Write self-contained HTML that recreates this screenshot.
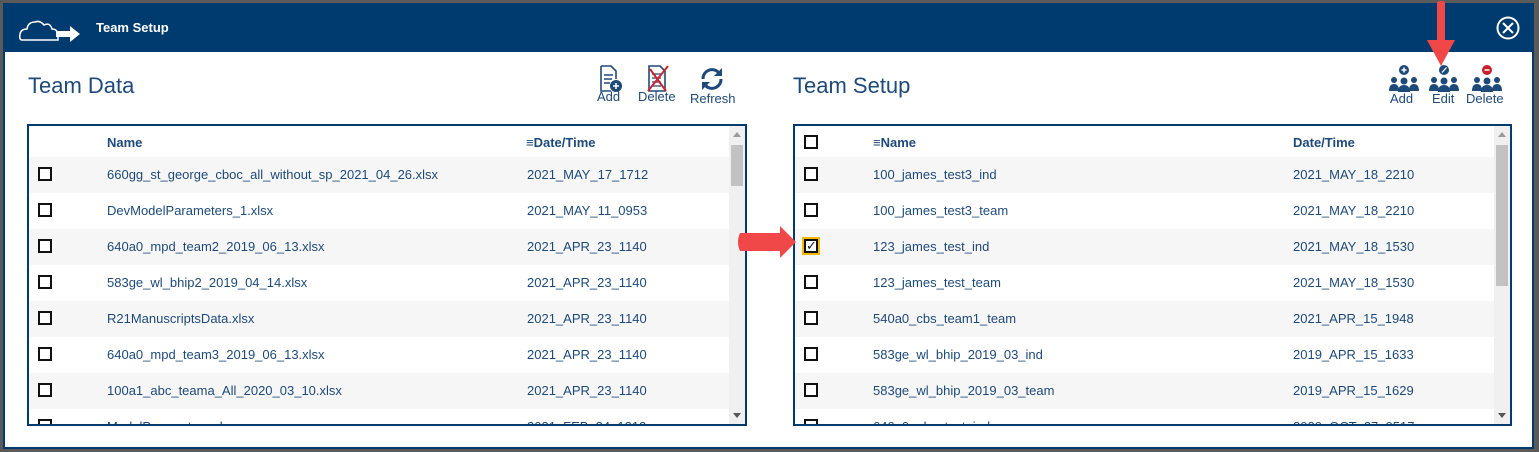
<!DOCTYPE html>
<html><head><style>
*{box-sizing:border-box;margin:0;padding:0}
body{width:1539px;height:452px;background:#5a5a5a;font-family:"Liberation Sans",sans-serif;position:relative;overflow:hidden}
.modal{position:absolute;left:3px;top:3px;width:1531px;height:446px;background:#fff;border:2px solid #003b6f;border-top:0}
.bar{position:absolute;left:0;top:0;width:100%;height:49px;background:#003b6f;color:#fff}
.bar .t{position:absolute;left:91px;top:17px;font-size:13px;font-weight:bold}
.h{position:absolute;top:70px;font-size:22px;color:#1e4a7a}
.tb{position:absolute;top:121px;height:302px;border:2px solid #003b6f;overflow:hidden;background:#fff}
.row{position:absolute;left:0;height:36px;width:100%;font-size:13px;color:#1e4a7a}
.row.g{background:#f6f6f6}
.row span{position:absolute;top:10px;white-space:nowrap}
.cb{position:absolute;left:9px;top:10px;width:14px;height:14px;border:2px solid #111;background:#fff}
.hd{font-weight:bold;font-size:13px}
.sb{position:absolute;top:0;right:0;width:16px;height:100%;background:#f0f0f0}
.sb .th{position:absolute;left:2px;width:12px;background:#c2c2c2}
.ic{position:absolute;font-size:13px;color:#1e4a7a;text-align:center}
</style></head><body>
<div class="modal">
<div class="bar">
<svg style="position:absolute;left:13px;top:14px" width="72" height="26" viewBox="0 0 72 26"><path d="M4 23 Q1 23 2 17 Q3 12 9 12 Q10 5 17 5 Q22 3 26 8 Q32 5 34 12 Q40 12 40 19 L40 23 Z" fill="none" stroke="#fff" stroke-width="1.5"/><path d="M38 14 H52 V9 L62 17 L52 25 V20 H38 Z" fill="#fff"/></svg>
<div class="t">Team Setup</div>
<svg style="position:absolute;left:1491px;top:13px" width="24" height="24" viewBox="0 0 24 24"><circle cx="12" cy="12" r="10.5" fill="none" stroke="#fff" stroke-width="2"/><path d="M7 7L17 17M17 7L7 17" stroke="#fff" stroke-width="2"/></svg>
</div>
<div class="h" style="left:23px">Team Data</div>
<div class="h" style="left:788px">Team Setup</div>

<svg style="position:absolute;left:594px;top:62px" width="26" height="28" viewBox="0 0 26 28"><path d="M2 1H12L17 6V14" fill="none" stroke="#1e4a7a" stroke-width="1.6"/><path d="M2 1V26H12" fill="none" stroke="#1e4a7a" stroke-width="1.6"/><path d="M5 10H14M5 14H13M5 18H11" stroke="#1e4a7a" stroke-width="1.4"/><circle cx="17" cy="21" r="6" fill="#1e4a7a"/><path d="M17 18V24M14 21H20" stroke="#fff" stroke-width="1.6"/></svg>
<div class="ic" style="left:592px;top:86px">Add</div>
<svg style="position:absolute;left:641px;top:62px" width="26" height="28" viewBox="0 0 26 28"><path d="M3 1H14L19 6V26H3Z" fill="none" stroke="#1e4a7a" stroke-width="1.6"/><path d="M6 9H15M6 13H15M6 17H15M6 21H15" stroke="#1e4a7a" stroke-width="1.2"/><path d="M4 4L20 26M22 1L2 26" stroke="#d0222c" stroke-width="2"/></svg>
<div class="ic" style="left:633px;top:86px">Delete</div>
<svg style="position:absolute;left:693px;top:62px" width="28" height="28" viewBox="0 0 28 28"><path d="M5 14A9 9 0 0 1 21 8" fill="none" stroke="#1e4a7a" stroke-width="3"/><path d="M23 14A9 9 0 0 1 7 20" fill="none" stroke="#1e4a7a" stroke-width="3"/><path d="M24 3V11H16Z" fill="#1e4a7a"/><path d="M4 25V17H12Z" fill="#1e4a7a"/></svg>
<div class="ic" style="left:685px;top:88px">Refresh</div>

<svg style="position:absolute;left:1383px;top:61px" width="32" height="28" viewBox="0 0 32 28"><circle cx="16" cy="6" r="5" fill="#1e4a7a"/><path d="M16 3.5V8.5M13.5 6H18.5" stroke="#fff" stroke-width="1.5"/><g fill="#1e4a7a"><circle cx="6" cy="16" r="3"/><circle cx="26" cy="16" r="3"/><circle cx="16" cy="17" r="3.5"/><path d="M1 27Q1 20 6 20Q11 20 11 27Z"/><path d="M21 27Q21 20 26 20Q31 20 31 27Z"/><path d="M10 28Q10 21 16 21Q22 21 22 28Z"/></g></svg>
<div class="ic" style="left:1385px;top:88px">Add</div>
<svg style="position:absolute;left:1423px;top:61px" width="32" height="28" viewBox="0 0 32 28"><circle cx="16" cy="6" r="5" fill="#1e4a7a"/><path d="M14 8.5L18.5 3.5" stroke="#fff" stroke-width="1.3"/><g fill="#1e4a7a"><circle cx="6" cy="16" r="3"/><circle cx="26" cy="16" r="3"/><circle cx="16" cy="17" r="3.5"/><path d="M1 27Q1 20 6 20Q11 20 11 27Z"/><path d="M21 27Q21 20 26 20Q31 20 31 27Z"/><path d="M10 28Q10 21 16 21Q22 21 22 28Z"/></g></svg>
<div class="ic" style="left:1427px;top:88px">Edit</div>
<svg style="position:absolute;left:1466px;top:61px" width="32" height="28" viewBox="0 0 32 28"><circle cx="16" cy="6" r="5" fill="#c8202a"/><path d="M13.5 6H18.5" stroke="#fff" stroke-width="1.5"/><g fill="#1e4a7a"><circle cx="6" cy="16" r="3"/><circle cx="26" cy="16" r="3"/><circle cx="16" cy="17" r="3.5"/><path d="M1 27Q1 20 6 20Q11 20 11 27Z"/><path d="M21 27Q21 20 26 20Q31 20 31 27Z"/><path d="M10 28Q10 21 16 21Q22 21 22 28Z"/></g></svg>
<div class="ic" style="left:1461px;top:88px">Delete</div>

<div class="tb" style="left:22px;width:720px">
<div class="row" style="top:0;height:32px"><span class="hd" style="left:78px;top:9px">Name</span><span class="hd" style="left:497px;top:9px">&#8801;Date/Time</span></div>
<div class="row g" style="top:31px"><div class="cb"></div><span style="left:78px">660gg_st_george_cboc_all_without_sp_2021_04_26.xlsx</span><span style="left:498px">2021_MAY_17_1712</span></div>
<div class="row" style="top:67px"><div class="cb"></div><span style="left:78px">DevModelParameters_1.xlsx</span><span style="left:498px">2021_MAY_11_0953</span></div>
<div class="row g" style="top:103px"><div class="cb"></div><span style="left:78px">640a0_mpd_team2_2019_06_13.xlsx</span><span style="left:498px">2021_APR_23_1140</span></div>
<div class="row" style="top:139px"><div class="cb"></div><span style="left:78px">583ge_wl_bhip2_2019_04_14.xlsx</span><span style="left:498px">2021_APR_23_1140</span></div>
<div class="row g" style="top:175px"><div class="cb"></div><span style="left:78px">R21ManuscriptsData.xlsx</span><span style="left:498px">2021_APR_23_1140</span></div>
<div class="row" style="top:211px"><div class="cb"></div><span style="left:78px">640a0_mpd_team3_2019_06_13.xlsx</span><span style="left:498px">2021_APR_23_1140</span></div>
<div class="row g" style="top:247px"><div class="cb"></div><span style="left:78px">100a1_abc_teama_All_2020_03_10.xlsx</span><span style="left:498px">2021_APR_23_1140</span></div>
<div class="row" style="top:283px"><div class="cb"></div><span style="left:78px">ModelParameters.xlsx</span><span style="left:498px">2021_FEB_24_1312</span></div>
<div class="sb"><div style="position:absolute;left:4px;top:6px;border:4px solid transparent;border-bottom:5px solid #999;border-top:0"></div><div class="th" style="top:19px;height:41px"></div><div style="position:absolute;left:4px;bottom:6px;border:4px solid transparent;border-top:5px solid #555;border-bottom:0"></div></div>
</div>

<div class="tb" style="left:788px;width:719px">
<div class="row" style="top:0;height:32px"><div class="cb" style="top:9px"></div><span class="hd" style="left:78px;top:9px">&#8801;Name</span><span class="hd" style="left:498px;top:9px">Date/Time</span></div>
<div class="row g" style="top:31px"><div class="cb"></div><span style="left:78px">100_james_test3_ind</span><span style="left:498px">2021_MAY_18_2210</span></div>
<div class="row" style="top:67px"><div class="cb"></div><span style="left:78px">100_james_test3_team</span><span style="left:498px">2021_MAY_18_2210</span></div>
<div class="row g" style="top:103px"><div class="cb" style="outline:2px solid #f5b800;font-size:13px;line-height:10px;text-align:center;color:#111">&#10003;</div><span style="left:78px">123_james_test_ind</span><span style="left:498px">2021_MAY_18_1530</span></div>
<div class="row" style="top:139px"><div class="cb"></div><span style="left:78px">123_james_test_team</span><span style="left:498px">2021_MAY_18_1530</span></div>
<div class="row g" style="top:175px"><div class="cb"></div><span style="left:78px">540a0_cbs_team1_team</span><span style="left:498px">2021_APR_15_1948</span></div>
<div class="row" style="top:211px"><div class="cb"></div><span style="left:78px">583ge_wl_bhip_2019_03_ind</span><span style="left:498px">2019_APR_15_1633</span></div>
<div class="row g" style="top:247px"><div class="cb"></div><span style="left:78px">583ge_wl_bhip_2019_03_team</span><span style="left:498px">2019_APR_15_1629</span></div>
<div class="row" style="top:283px"><div class="cb"></div><span style="left:78px">640a0_abc_test_ind</span><span style="left:498px">2020_OCT_27_0517</span></div>
<div class="sb"><div style="position:absolute;left:4px;top:6px;border:4px solid transparent;border-bottom:5px solid #999;border-top:0"></div><div class="th" style="top:19px;height:141px"></div><div style="position:absolute;left:4px;bottom:6px;border:4px solid transparent;border-top:5px solid #555;border-bottom:0"></div></div>
</div>
</div>
<svg style="position:absolute;left:0;top:0" width="1539" height="452">
<g fill="#f04848"><path d="M1437 2 Q1441 0 1445 2 L1445 40 L1455 40 L1441 66 L1427 40 L1437 40Z"/><path d="M740 233 L780 233 L780 226 L796 242 L780 258 L780 251 L740 251 Q736 242 740 233Z"/></g>
</svg>
</body></html>
